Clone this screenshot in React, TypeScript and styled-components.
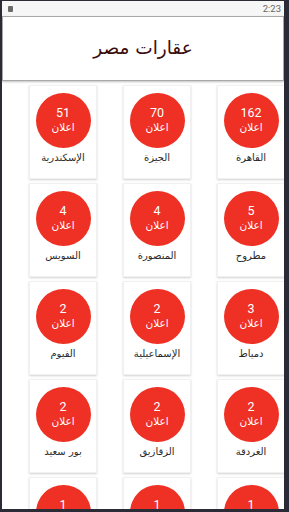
import React from "react";
import styled, { createGlobalStyle } from "styled-components";

const Global = createGlobalStyle`
  html, body { margin: 0; padding: 0; background: #2b2b38; }
  * { box-sizing: border-box; }
`;

const Frame = styled.div`
  width: 289px;
  height: 512px;
  padding: 1px 5px 3px 2px;
  background: #2b2b38;
`;

const Screen = styled.div`
  width: 282px;
  height: 508px;
  background: #ffffff;
  overflow: hidden;
  display: flex;
  flex-direction: column;
`;

const StatusBar = styled.div`
  height: 15px;
  flex: none;
  background: #f6f6f6;
  display: flex;
  align-items: center;
  justify-content: space-between;
  padding: 0 3px 0 6px;
  font-family: Roboto, "Liberation Sans", sans-serif;
  font-size: 9.5px;
  color: #666;
`;

const StatusIcon = styled.div`
  width: 5px;
  height: 6px;
  background: #6a6a6a;
  border-radius: 1px;
  margin-top: 1px;
`;

const Header = styled.div`
  height: 65px;
  flex: none;
  border: 1px solid #a8a8a8;
  box-shadow: 0 1px 2px rgba(0, 0, 0, 0.25);
  display: flex;
  align-items: center;
  justify-content: center;
  font-family: "DejaVu Sans", sans-serif;
  font-size: 18.5px;
  color: #3a0c0c;
  padding-bottom: 2px;
`;

const Grid = styled.div`
  direction: rtl;
  display: grid;
  grid-template-columns: repeat(3, 68px);
  column-gap: 26px;
  row-gap: 4px;
  padding: 4px 0 0 0;
  margin-right: -1px;
`;

const Card = styled.div`
  height: 94px;
  background: #fff;
  border: 1px solid #f1f1f1;
  box-shadow: 0 1px 2px rgba(0, 0, 0, 0.18);
  display: flex;
  flex-direction: column;
  align-items: center;
  padding-top: 7px;
`;

const Circle = styled.div`
  width: 55px;
  height: 55px;
  border-radius: 50%;
  background: #ee3124;
  color: #fff;
  display: flex;
  flex-direction: column;
  align-items: center;
  justify-content: center;
  padding-bottom: 1px;
`;

const Count = styled.div`
  font-family: Roboto, "Liberation Sans", sans-serif;
  font-size: 12.5px;
  line-height: 14px;
`;

const Ads = styled.div`
  font-family: "DejaVu Sans", sans-serif;
  font-size: 10.5px;
  line-height: 15px;
`;

const Label = styled.div`
  margin-top: 4px;
  font-family: "DejaVu Sans", sans-serif;
  font-size: 10px;
  color: #2a2a2a;
  white-space: nowrap;
`;

const items: [string, number][] = [
  ["القاهرة", 162],
  ["الجيزة", 70],
  ["الإسكندرية", 51],
  ["مطروح", 5],
  ["المنصورة", 4],
  ["السويس", 4],
  ["دمياط", 3],
  ["الإسماعيلية", 2],
  ["الفيوم", 2],
  ["الغردقة", 2],
  ["الزقازيق", 2],
  ["بور سعيد", 2],
  ["أسوان", 1],
  ["طنطا", 1],
  ["بنها", 1],
];

export default function App() {
  return (
    <>
      <Global />
      <Frame>
        <Screen>
          <StatusBar>
            <StatusIcon />
            <span>2:23</span>
          </StatusBar>
          <Header>عقارات مصر</Header>
          <Grid>
            {items.map(([name, n]) => (
              <Card key={name}>
                <Circle>
                  <Count>{n}</Count>
                  <Ads>اعلان</Ads>
                </Circle>
                <Label>{name}</Label>
              </Card>
            ))}
          </Grid>
        </Screen>
      </Frame>
    </>
  );
}
